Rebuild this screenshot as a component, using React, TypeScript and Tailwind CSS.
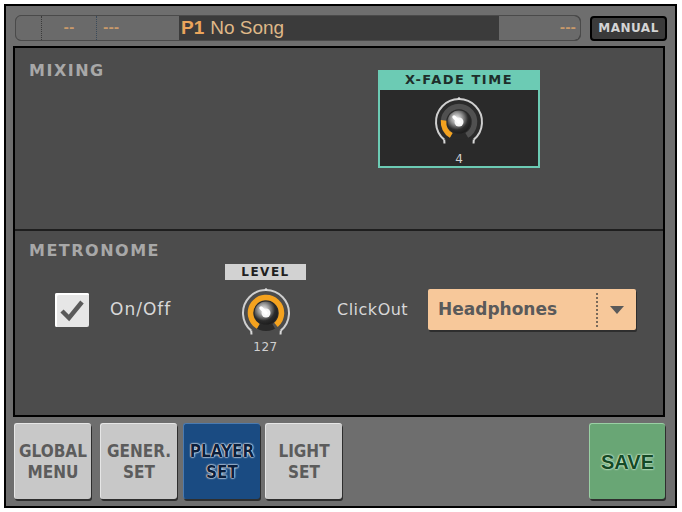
import React from 'react';

const pixel = { fontFamily: '"DejaVu Sans", "Liberation Sans", sans-serif' };
const condensed = { fontFamily: '"DejaVu Sans Condensed", "DejaVu Sans", sans-serif' };

// angle measured from 12 o'clock, clockwise
const pt = (cx: number, cy: number, r: number, deg: number) => {
  const a = ((deg - 90) * Math.PI) / 180;
  return [cx + r * Math.cos(a), cy + r * Math.sin(a)];
};

const arc = (cx: number, cy: number, r: number, from: number, to: number) => {
  const [x1, y1] = pt(cx, cy, r, from);
  const [x2, y2] = pt(cx, cy, r, to);
  const large = to - from > 180 ? 1 : 0;
  return `M ${x1} ${y1} A ${r} ${r} 0 ${large} 1 ${x2} ${y2}`;
};

const Knob = ({ fill, pointer, id }: { fill: number; pointer: number; id: string }) => {
  const end = -140 + 280 * fill;
  const [t1x, t1y] = pt(26, 26, 23, -140);
  const [t1bx, t1by] = pt(26, 26, 26, -146);
  const [t2x, t2y] = pt(26, 26, 23, 140);
  const [t2bx, t2by] = pt(26, 26, 26, 146);
  const [px, py] = pt(26, 26, 7, pointer);
  return (
    <svg width="52" height="52" viewBox="0 0 52 52">
      <defs>
        <radialGradient id={id} cx="0.4" cy="0.35" r="0.7">
          <stop offset="0" stopColor="#f4f4f4" />
          <stop offset="0.35" stopColor="#9a9a9a" />
          <stop offset="0.7" stopColor="#2c2c2c" />
          <stop offset="1" stopColor="#1a1a1a" />
        </radialGradient>
      </defs>
      <path d={arc(26, 26, 23, -140, 140)} fill="none" stroke="#cfcfcf" strokeWidth="2" />
      <line x1={t1x} y1={t1y} x2={t1bx} y2={t1by} stroke="#d8d8d8" strokeWidth="2" />
      <line x1={t2x} y1={t2y} x2={t2bx} y2={t2by} stroke="#d8d8d8" strokeWidth="2" />
      <circle cx="26" cy="2.5" r="1.3" fill="#e0e0e0" />
      <circle cx="26" cy="26" r="18" fill="#2a2a2a" />
      <path d={arc(26, 26, 15.5, -150, 150)} fill="none" stroke="#505050" strokeWidth="5.5" />
      <path d={arc(26, 26, 15.5, -150, end)} fill="none" stroke="#f4a21e" strokeWidth="5.5" />
      <circle cx="26" cy="26" r="11.5" fill={`url(#${id})`} />
      <circle cx="26" cy="26" r="4.5" fill="#f6f6f6" />
      <line x1="26" y1="26" x2={px} y2={py} stroke="#ffffff" strokeWidth="3.5" strokeLinecap="round" />
    </svg>
  );
};

const NavButton = ({ top, bottom, active }: { top: string; bottom: string; active?: boolean }) => (
  <div
    className={`flex h-[76px] w-[77px] flex-col items-center justify-center rounded-[3px] border-t border-l text-[17px] font-bold leading-[21px] shadow-[1px_2px_0_#2e2e2e] ${
      active
        ? 'border-[#4a7ab0] bg-[#1a4b82] text-[#0b1f3d] [text-shadow:0_0_2px_#ffffff,0_0_2px_#ffffff,0_0_1px_#ffffff]'
        : 'border-[#e6e6e6] bg-[#c8c8c8] text-[#5c5c5c]'
    }`}
    style={condensed}
  >
    <span>{top}</span>
    <span>{bottom}</span>
  </div>
);

export default function App() {
  return (
    <div className="h-[512px] w-[682px] bg-white pl-[4px] pt-[4px]">
      <div className="flex h-[504px] w-[673px] flex-col border-2 border-black bg-[#6e6e6e] pl-[7px]">
        {/* Top status bar */}
        <div className="mt-[9px] flex h-[26px] items-center">
          <div className="ml-[2px] flex h-[26px] w-[566px] overflow-hidden rounded-[6px] border border-[#4a4a4a] bg-[#3b3b3b]">
            <div className="w-[26px] border-r border-dotted border-[#3a3a3a] bg-[#6a6a6a]" />
            <div className="flex w-[55px] items-center justify-center border-r border-dotted border-[#3a4a5a] bg-[#6a6a6a] text-[13px] font-bold text-[#c99a6a]" style={pixel}>
              --
            </div>
            <div className="flex w-[82px] items-center bg-[#6a6a6a] pl-[6px] text-[13px] font-bold text-[#c99a6a]" style={pixel}>
              ---
            </div>
            <div className="flex flex-1 items-center pl-[2px] text-[19px] text-[#dfb888]" style={{ fontFamily: '"Liberation Sans Narrow", "Liberation Sans", sans-serif' }}>
              <span className="mr-[6px] font-bold text-[#eaa55c]">P1</span>
              <span>No Song</span>
            </div>
            <div className="flex w-[81px] items-center justify-end rounded-r-[6px] bg-[#6a6a6a] pr-[4px] text-[13px] font-bold text-[#c99a6a]" style={pixel}>
              ---
            </div>
          </div>
          <div className="ml-[9px] flex h-[25px] w-[77px] items-center justify-center rounded-[4px] border-2 border-black bg-[#3a3a3a] text-[12px] font-bold tracking-[0.5px] text-[#d4d4d4]" style={pixel}>
            MANUAL
          </div>
        </div>

        {/* Main panel */}
        <div className="mt-[5px] flex h-[371px] w-[652px] flex-col border-2 border-black bg-[#4c4c4c]">
          {/* Mixing */}
          <div className="flex h-[183px] border-b-2 border-[#1e1e1e] pl-[14px]">
            <div className="w-[349px] pt-[11px] text-[16px] font-bold tracking-[1.5px] text-[#a8a8a8]" style={pixel}>
              MIXING
            </div>
            <div className="mt-[22px] flex h-[98px] w-[162px] flex-col border-2 border-t-0 border-[#6ccbb4] bg-[#2a2a2a]">
              <div className="flex h-[20px] items-center justify-center bg-[#6ccbb4] text-[13px] font-bold tracking-[1.5px] text-[#1e2e2a]" style={pixel}>
                X-FADE TIME
              </div>
              <div className="mt-[6px] flex justify-center">
                <Knob fill={0.2} pointer={-45} id="kx" />
              </div>
              <div className="mt-[4px] text-center text-[12px] leading-[14px] text-[#d0d0d0]" style={pixel}>
                4
              </div>
            </div>
          </div>

          {/* Metronome */}
          <div className="flex flex-1 flex-col pl-[14px]">
            <div className="pt-[11px] text-[16px] font-bold leading-[18px] tracking-[1.5px] text-[#a8a8a8]" style={pixel}>
              METRONOME
            </div>
            <div className="mt-[4px] flex items-center">
              <div className="ml-[26px] flex h-[34px] w-[34px] items-center justify-center rounded-[2px] bg-[#e6e6e6] shadow-[inset_2px_2px_0_#ffffff]">
                <svg width="26" height="24" viewBox="0 0 26 24">
                  <path d="M3 13 L10 20 L23 4" fill="none" stroke="#5a5a5a" strokeWidth="4.5" strokeLinejoin="miter" />
                </svg>
              </div>
              <div className="ml-[21px] w-[115px] text-[17px] tracking-[1px] text-[#d8d8d8]" style={pixel}>
                On/Off
              </div>
              <div className="flex w-[81px] flex-col items-center">
                <div className="flex h-[16px] w-[81px] items-center justify-center bg-[#d2d2d2] text-[12px] font-bold tracking-[1.5px] text-[#202020]" style={pixel}>
                  LEVEL
                </div>
                <div className="mt-[7px]">
                  <Knob fill={1} pointer={-45} id="kl" />
                </div>
                <div className="mt-[0px] text-[12px] leading-[16px] tracking-[0.5px] text-[#d0d0d0]" style={pixel}>
                  127
                </div>
              </div>
              <div className="ml-[31px] w-[91px] text-[16px] tracking-[0.5px] text-[#d8d8d8]" style={pixel}>
                ClickOut
              </div>
              <div className="flex h-[41px] w-[208px] items-center rounded-[2px] bg-[#f7c89a] shadow-[1px_2px_0_#2e2e2e]">
                <div className="flex-1 pl-[10px] text-[17px] font-bold text-[#5a5a5a]" style={pixel}>
                  Headphones
                </div>
                <div className="flex h-[34px] w-[40px] items-center justify-center border-l-2 border-dotted border-[#7a6a5a]">
                  <svg width="14" height="8" viewBox="0 0 14 8">
                    <path d="M0 0 L14 0 L7 8 Z" fill="#5a5a5a" />
                  </svg>
                </div>
              </div>
            </div>
          </div>
        </div>

        {/* Bottom navigation */}
        <div className="mt-[6px] flex h-[76px] w-[652px] items-start pl-[1px]">
          <NavButton top="GLOBAL" bottom="MENU" />
          <div className="ml-[9px]">
            <NavButton top="GENER." bottom="SET" />
          </div>
          <div className="ml-[6px]">
            <NavButton top="PLAYER" bottom="SET" active />
          </div>
          <div className="ml-[5px]">
            <NavButton top="LIGHT" bottom="SET" />
          </div>
          <div
            className="ml-auto flex h-[76px] w-[76px] items-center justify-center rounded-[3px] border-t border-l border-[#9ad0a4] bg-[#69a675] text-[20px] font-bold text-[#154a26] shadow-[1px_2px_0_#2e2e2e] [text-shadow:0_0_2px_#e8ffe8,0_0_2px_#e8ffe8]"
            style={{ fontFamily: '"Liberation Sans", sans-serif' }}
          >
            SAVE
          </div>
        </div>
      </div>
    </div>
  );
}
